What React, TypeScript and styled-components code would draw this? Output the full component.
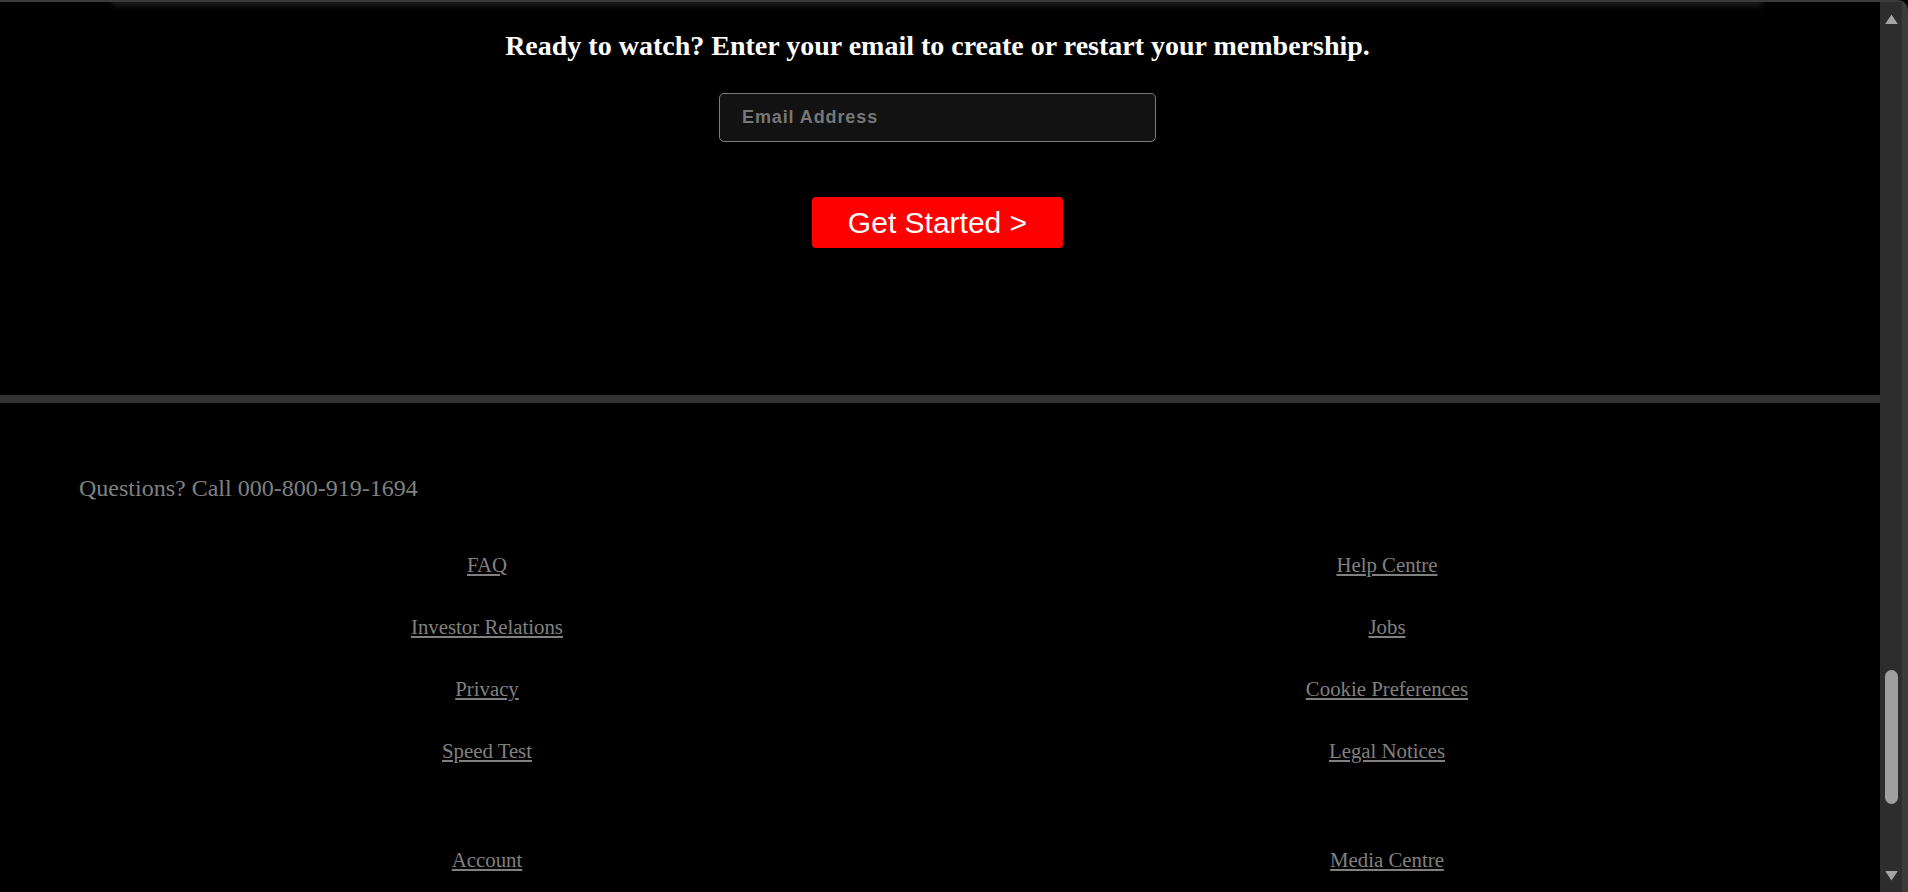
import React from "react";
import styled, { createGlobalStyle } from "styled-components";

const GlobalStyle = createGlobalStyle`
  html, body {
    margin: 0;
    padding: 0;
    background: #000;
    overflow: hidden;
  }
  * { box-sizing: border-box; }
`;

const Frame = styled.div`
  display: flex;
  width: 1908px;
  height: 892px;
  background: #3b3b3b;
  padding: 2px 6px 0 0;
  border-top-right-radius: 10px;
  overflow: hidden;
`;

const Viewport = styled.main`
  flex: 1;
  display: flex;
  flex-direction: column;
  background: #000;
  overflow: hidden;
  & > * {
    flex-shrink: 0;
  }
`;

const TopShade = styled.div`
  height: 0;
  margin: 0 120px 0 115px;
  box-shadow: 0 0 6px 3px rgba(70, 70, 70, 0.55);
`;

const CtaSection = styled.section`
  height: 393px;
  display: flex;
  flex-direction: column;
  align-items: center;
  padding: 28px 5px 0 0;
`;

const CtaTitle = styled.h3`
  margin: 0;
  font-family: "Liberation Serif", "Times New Roman", serif;
  font-weight: 700;
  font-size: 28px;
  line-height: 32px;
  color: #fff;
`;

const EmailInput = styled.input`
  margin-top: 31px;
  width: 437px;
  height: 49px;
  background: #121212;
  border: 1px solid #7a7a7a;
  border-radius: 5px;
  padding: 0 22px;
  font-family: "Liberation Sans", Arial, sans-serif;
  font-weight: 700;
  font-size: 18px;
  letter-spacing: 0.9px;
  color: #ddd;
  outline: none;
  &::placeholder {
    color: #777;
  }
`;

const StartButton = styled.button`
  margin-top: 55px;
  width: 251px;
  height: 51px;
  background: #ff0000;
  border: none;
  border-radius: 4px;
  color: #fff;
  font-family: "Liberation Sans", Arial, sans-serif;
  font-size: 30px;
  line-height: 1;
  padding: 0;
  cursor: pointer;
`;

const Divider = styled.hr`
  margin: 0;
  border: none;
  height: 8px;
  background: #333;
`;

const Footer = styled.footer`
  padding: 71px 5px 0 0;
  font-family: "Liberation Serif", "Times New Roman", serif;
  font-size: 20.8px;
  line-height: 24px;
  color: #808080;
`;

const Contact = styled.p`
  margin: 0 0 0 79px;
  font-size: 24px;
  line-height: 28px;
`;

const LinkGrid = styled.div`
  margin: 51px 0 0 37px;
  display: grid;
  grid-template-columns: 900px 900px;
  row-gap: 85px;
`;

const LinkList = styled.ul`
  margin: 0;
  padding: 0;
  list-style: none;
  display: flex;
  flex-direction: column;
  align-items: center;
  gap: 38px;
`;

const FooterLink = styled.a`
  color: #808080;
  text-decoration: underline;
`;

const ScrollTrack = styled.div`
  width: 22px;
  background: #2d2d2d;
  display: flex;
  flex-direction: column;
  align-items: center;
  padding: 11px 0 10px;
`;

const Arrow = styled.svg`
  width: 15px;
  height: 12px;
  display: block;
`;

const Spacer = styled.div`
  flex: 1;
`;

const Thumb = styled.div`
  width: 13px;
  height: 134px;
  border-radius: 7px;
  background: #9f9f9f;
  margin-bottom: 66px;
`;

const columns: string[][] = [
  ["FAQ", "Investor Relations", "Privacy", "Speed Test"],
  ["Help Centre", "Jobs", "Cookie Preferences", "Legal Notices"],
  ["Account"],
  ["Media Centre"],
];

export default function App() {
  return (
    <>
      <GlobalStyle />
      <Frame>
        <Viewport>
          <TopShade />
          <CtaSection>
            <CtaTitle>Ready to watch? Enter your email to create or restart your membership.</CtaTitle>
            <EmailInput type="email" placeholder="Email Address" />
            <StartButton>Get Started &gt;</StartButton>
          </CtaSection>
          <Divider />
          <Footer>
            <Contact>Questions? Call 000-800-919-1694</Contact>
            <LinkGrid>
              {columns.map((col, i) => (
                <LinkList key={i}>
                  {col.map((label) => (
                    <li key={label}>
                      <FooterLink href="#">{label}</FooterLink>
                    </li>
                  ))}
                </LinkList>
              ))}
            </LinkGrid>
          </Footer>
        </Viewport>
        <ScrollTrack>
          <Arrow viewBox="0 0 15 12">
            <path d="M7.5 1.5 L13.5 10.5 Q14 11 13 11 L2 11 Q1 11 1.5 10.5 Z" fill="#a3a3a3" />
          </Arrow>
          <Spacer />
          <Thumb />
          <Arrow viewBox="0 0 15 12">
            <path d="M7.5 10.5 L13.5 1.5 Q14 1 13 1 L2 1 Q1 1 1.5 1.5 Z" fill="#a3a3a3" />
          </Arrow>
        </ScrollTrack>
      </Frame>
    </>
  );
}
